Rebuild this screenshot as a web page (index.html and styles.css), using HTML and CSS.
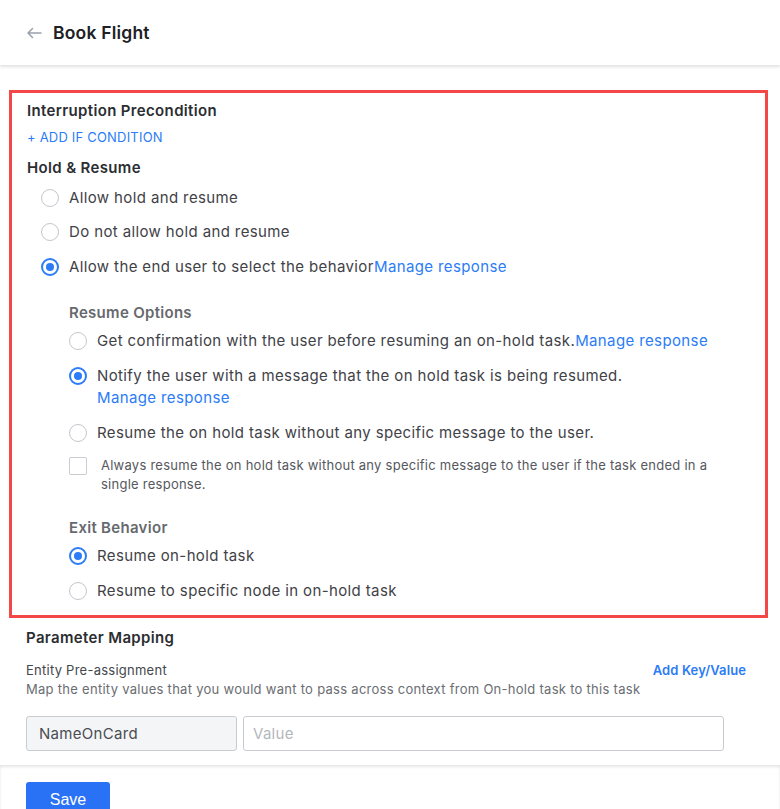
FILE: index.html
```html
<!DOCTYPE html>
<html>
<head>
<meta charset="utf-8">
<link rel="stylesheet" href="styles.css">
</head>
<body>
<div class="page">
  <header class="header">
    <svg class="back" width="16" height="12" viewBox="0 0 16 12"><path d="M15 6H2M6.5 1.5L2 6l4.5 4.5" fill="none" stroke="#9aa1a9" stroke-width="1.5" stroke-linecap="round" stroke-linejoin="round"/></svg>
    <h1 class="title">Book Flight</h1>
  </header>

  <main class="content">
    <section class="highlight">
      <h2 class="sec-title">Interruption Precondition</h2>
      <a class="add-link">+ ADD IF CONDITION</a>
      <h2 class="sec-title hold">Hold &amp; Resume</h2>

      <div class="opt first"><span class="radio"></span><span>Allow hold and resume</span></div>
      <div class="opt"><span class="radio"></span><span>Do not allow hold and resume</span></div>
      <div class="opt opt3"><span class="radio on"></span><span>Allow the end user to select the behavior<a class="link">Manage response</a></span></div>

      <div class="sub">
        <h3 class="sub-title">Resume Options</h3>
        <div class="opt first"><span class="radio"></span><span>Get confirmation with the user before resuming an on-hold task.<a class="link">Manage response</a></span></div>
        <div class="opt"><span class="radio on"></span><span>Notify the user with a message that the on hold task is being resumed.<br><a class="link">Manage response</a></span></div>
        <div class="opt"><span class="radio"></span><span>Resume the on hold task without any specific message to the user.</span></div>
        <div class="check-row"><span class="checkbox"></span><span>Always resume the on hold task without any specific message to the user if the task ended in a single response.</span></div>

        <h3 class="sub-title exit">Exit Behavior</h3>
        <div class="opt first"><span class="radio on"></span><span>Resume on-hold task</span></div>
        <div class="opt"><span class="radio"></span><span>Resume to specific node in on-hold task</span></div>
      </div>
    </section>

    <section class="params">
      <h2 class="sec-title">Parameter Mapping</h2>
      <div class="entity-head">
        <span class="entity-label">Entity Pre-assignment</span>
        <a class="add-kv">Add Key/Value</a>
      </div>
      <p class="entity-desc">Map the entity values that you would want to pass across context from On-hold task to this task</p>
      <div class="kv-row">
        <div class="input key">NameOnCard</div>
        <div class="input val">Value</div>
      </div>
    </section>
  </main>

  <footer class="footer">
    <button class="save">Save</button>
  </footer>
</div>
</body>
</html>
```

FILE: styles.css
```css
* { box-sizing: border-box; margin: 0; padding: 0; }
html, body { background: #fff; }
body {
  font-family: Inter, "Noto Sans", sans-serif;
  color: #3a3d42;
  overflow: hidden;
}
.page { width: 780px; height: 809px; }

.header {
  height: 65px;
  display: flex;
  align-items: center;
  padding-left: 26px;
  box-shadow: 0 2px 3px rgba(0, 0, 0, 0.12);
  position: relative;
}
.back { margin-right: 11px; }
.title {
  font-size: 17.5px;
  font-weight: 600;
  color: #202124;
  letter-spacing: 0.2px;
}

.content { padding: 25px 12px 0 9px; }

.highlight {
  border: 3px solid #f44747;
  padding: 8px 16px 13px 15px;
}
.sec-title {
  font-size: 15px;
  font-weight: 600;
  line-height: 20px;
  color: #2b2d31;
  letter-spacing: 0.35px;
}
.sec-title.hold { margin-top: 12px; }
.add-link {
  display: block;
  margin-top: 7px;
  font-size: 13px;
  line-height: 18px;
  color: #2b7cf6;
  letter-spacing: 0.2px;
}
.link { color: #2b7cf6; }

.opt {
  display: flex;
  align-items: flex-start;
  gap: 10px;
  font-size: 15px;
  line-height: 22px;
  color: #3f4247;
  letter-spacing: 0.38px;
  margin-top: 12px;
  padding-left: 14px;
}
.opt.first { margin-top: 9px; }
.opt.opt3 { margin-top: 13px; }
.sub .opt { padding-left: 42px; margin-top: 13px; }
.sub .opt.first { margin-top: 7px; }

.radio {
  flex: none;
  width: 18px;
  height: 18px;
  margin-top: 2px;
  border-radius: 50%;
  border: 1.5px solid #c3c7cd;
  background: #fff;
  position: relative;
}
.radio.on { border: 2px solid #2b7cf6; }
.radio.on::after {
  content: "";
  position: absolute;
  left: 3px; top: 3px;
  width: 8px; height: 8px;
  border-radius: 50%;
  background: #2b7cf6;
}

.sub-title {
  margin-top: 25px;
  padding-left: 42px;
  font-size: 15px;
  font-weight: 600;
  line-height: 20px;
  color: #66696e;
  letter-spacing: 0.3px;
}
.sub-title.exit { margin-top: 24px; }

.check-row {
  display: flex;
  align-items: flex-start;
  gap: 14px;
  margin-top: 12px;
  padding-left: 42px;
  padding-right: 40px;
  font-size: 13px;
  line-height: 19px;
  color: #55585d;
  letter-spacing: 0.25px;
}
.checkbox {
  flex: none;
  width: 18px;
  height: 18px;
  border: 1px solid #c9ccd1;
  border-radius: 2px;
  margin-top: 1px;
}

.params { padding: 10px 10px 0 17px; }
.entity-head {
  display: flex;
  justify-content: space-between;
  align-items: center;
  margin-top: 13px;
  line-height: 18px;
  padding-right: 12px;
}
.entity-label { font-size: 13px; color: #44474c; letter-spacing: 0.25px; }
.add-kv { font-size: 13px; font-weight: 600; color: #2b7cf6; letter-spacing: 0.1px; }
.entity-desc {
  font-size: 13px;
  line-height: 18px;
  color: #6a6d72;
  margin-top: 1px;
  letter-spacing: 0.28px;
}
.kv-row {
  display: flex;
  gap: 6px;
  margin-top: 18px;
  padding-right: 34px;
}
.input {
  height: 35px;
  border: 1px solid #c8cbd0;
  border-radius: 3px;
  font-size: 15px;
  line-height: 33px;
  padding: 0 12px;
  letter-spacing: 0.3px;
}
.input.key { width: 211px; background: #f4f5f7; color: #4a4d52; }
.input.val { flex: 1; padding-left: 9px; color: #b4b7bc; }

.footer {
  margin-top: 14px;
  box-shadow: inset 0 2px 3px rgba(0, 0, 0, 0.1);
  padding: 17px 0 0 26px;
}
.save {
  width: 84px;
  height: 34px;
  background: #2a72f5;
  color: #fff;
  border: none;
  border-radius: 3px;
  font-family: "Liberation Sans", Arial, sans-serif;
  font-size: 16px;
  padding-top: 2px;
}
```
